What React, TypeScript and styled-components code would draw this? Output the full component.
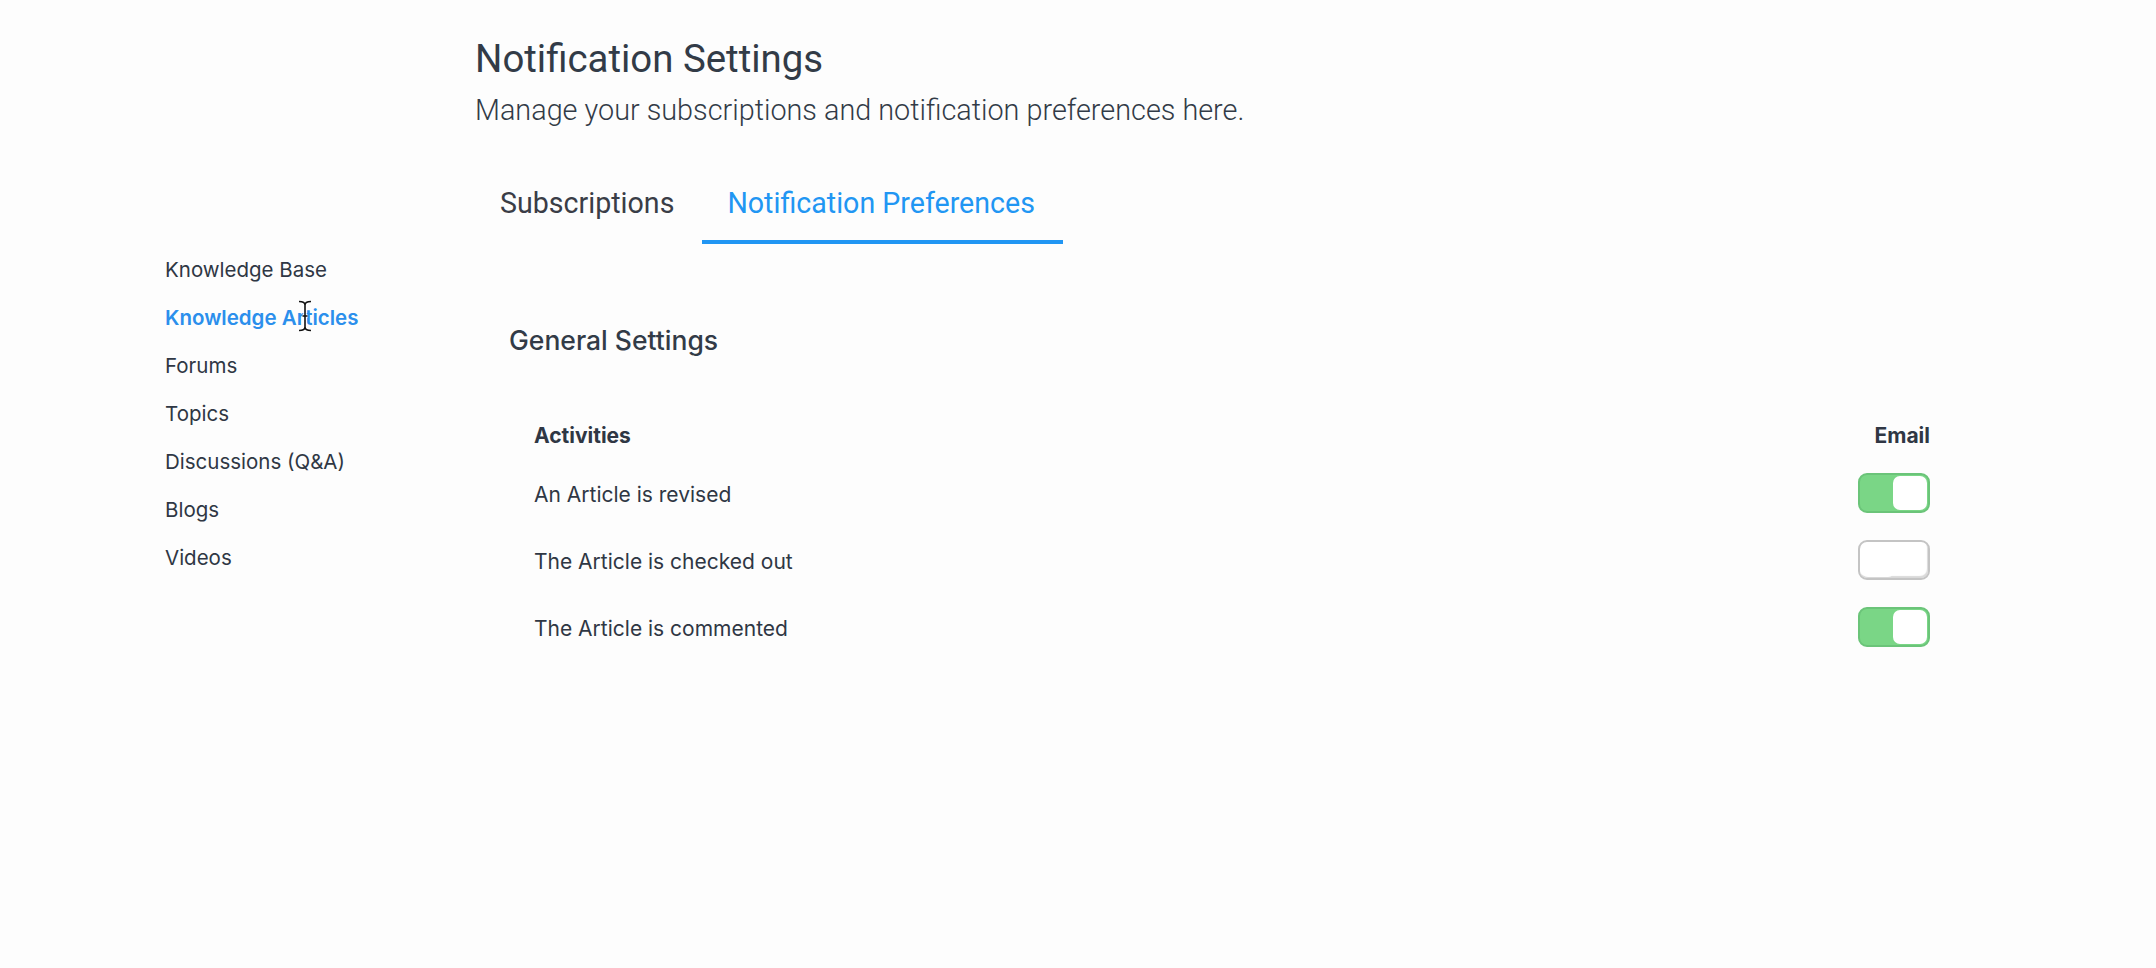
import React from "react";
import styled, { createGlobalStyle } from "styled-components";

const GlobalStyle = createGlobalStyle`
  html, body {
    margin: 0;
    padding: 0;
    background: #fdfdfd;
  }
  body {
    font-family: Roboto, "Noto Sans", sans-serif;
    color: #323b47;
  }
`;

const uiFont = `Inter, Roboto, "Noto Sans", sans-serif`;

const Page = styled.div`
  position: relative;
  display: flex;
  min-height: 968px;
  padding-left: 165px;
  box-sizing: border-box;
`;

const Sidebar = styled.nav`
  width: 310px;
  flex: 0 0 310px;
  padding-top: 246px;
  display: flex;
  flex-direction: column;
`;

const NavItem = styled.a<{ $active?: boolean }>`
  font-family: ${uiFont};
  font-size: 20.5px;
  line-height: 48px;
  font-weight: ${({ $active }) => ($active ? 600 : 400)};
  color: ${({ $active }) => ($active ? "#2b8fec" : "#2f3744")};
  text-decoration: none;
  cursor: pointer;
`;

const Main = styled.main`
  width: 1455px;
  padding-top: 36px;
`;

const Title = styled.h1`
  margin: 0;
  font-size: 38.4px;
  line-height: 46px;
  font-weight: 400;
  color: #323b47;
`;

const Subtitle = styled.p`
  margin: 11px 0 0;
  font-size: 28.8px;
  line-height: 34px;
  font-weight: 300;
  color: #323b47;
`;

const TabList = styled.div`
  display: flex;
  margin-top: 48px;
`;

const Tab = styled.button<{ $active?: boolean }>`
  font-family: Roboto, sans-serif;
  font-size: 28.6px;
  line-height: 32px;
  font-weight: 400;
  background: none;
  border: none;
  padding: 12px 28px 21px 25px;
  border-bottom: 4px solid
    ${({ $active }) => ($active ? "#2196f3" : "transparent")};
  color: ${({ $active }) => ($active ? "#2196f3" : "#3a3d47")};
  cursor: pointer;
`;

const Section = styled.section`
  margin-top: 80px;
  padding-left: 34px;
`;

const SectionTitle = styled.h2`
  margin: 0;
  font-family: ${uiFont};
  font-size: 26.5px;
  line-height: 32px;
  font-weight: 500;
  color: #323b47;
`;

const Table = styled.div`
  margin-top: 67px;
  margin-left: 25px;
  width: 1396px;
  display: flex;
  flex-direction: column;
`;

const HeaderRow = styled.div`
  display: flex;
  justify-content: space-between;
  font-family: ${uiFont};
  font-size: 21px;
  line-height: 26px;
  font-weight: 700;
  color: #2f3744;
  margin-bottom: 10px;
`;

const Row = styled.div`
  display: flex;
  justify-content: space-between;
  align-items: center;
  height: 67px;
`;

const Label = styled.span`
  font-family: ${uiFont};
  font-size: 21px;
  line-height: 26px;
  padding-top: 4px;
  color: #2f3744;
`;

const Switch = styled.span<{ $on?: boolean }>`
  position: relative;
  display: inline-block;
  width: 72px;
  height: 40px;
  box-sizing: border-box;
  border-radius: 9px;
  border: 2px solid ${({ $on }) => ($on ? "#6bc479" : "#c4c4c4")};
  background: ${({ $on }) => ($on ? "#7ad686" : "#ffffff")};
  box-shadow: ${({ $on }) =>
    $on ? "none" : "inset -1px -2px 1px rgba(0, 0, 0, 0.15)"};
  cursor: pointer;
`;

const Knob = styled.span<{ $on?: boolean }>`
  position: absolute;
  top: 1px;
  ${({ $on }) => ($on ? "right: 1px;" : "left: 1px;")}
  width: 34px;
  height: 34px;
  border-radius: 7px;
  background: #ffffff;
`;

const Cursor = styled.svg`
  position: absolute;
  left: 297px;
  top: 300px;
  pointer-events: none;
`;

const navItems = [
  "Knowledge Base",
  "Knowledge Articles",
  "Forums",
  "Topics",
  "Discussions (Q&A)",
  "Blogs",
  "Videos",
];

const activities = [
  { label: "An Article is revised", on: true },
  { label: "The Article is checked out", on: false },
  { label: "The Article is commented", on: true },
];

const beam =
  "M2 1.5 C5 1.5 8 2.5 8 5 L8 27 C8 29.5 5 30.5 2 30.5 M14 1.5 C11 1.5 8 2.5 8 5 M8 27 C8 29.5 11 30.5 14 30.5 M5.5 16 L10.5 16";

export default function App() {
  return (
    <>
      <GlobalStyle />
      <Page>
        <Sidebar>
          {navItems.map((item) => (
            <NavItem key={item} $active={item === "Knowledge Articles"}>
              {item}
            </NavItem>
          ))}
        </Sidebar>
        <Main>
          <Title>Notification Settings</Title>
          <Subtitle>
            Manage your subscriptions and notification preferences here.
          </Subtitle>
          <TabList>
            <Tab>Subscriptions</Tab>
            <Tab $active>Notification Preferences</Tab>
          </TabList>
          <Section>
            <SectionTitle>General Settings</SectionTitle>
            <Table>
              <HeaderRow>
                <span>Activities</span>
                <span>Email</span>
              </HeaderRow>
              {activities.map((a) => (
                <Row key={a.label}>
                  <Label>{a.label}</Label>
                  <Switch $on={a.on}>
                    <Knob $on={a.on} />
                  </Switch>
                </Row>
              ))}
            </Table>
          </Section>
        </Main>
        <Cursor width="16" height="32" viewBox="0 0 16 32">
          <path d={beam} fill="none" stroke="#ffffff" strokeWidth="3.5" />
          <path d={beam} fill="none" stroke="#111111" strokeWidth="1.6" />
        </Cursor>
      </Page>
    </>
  );
}
